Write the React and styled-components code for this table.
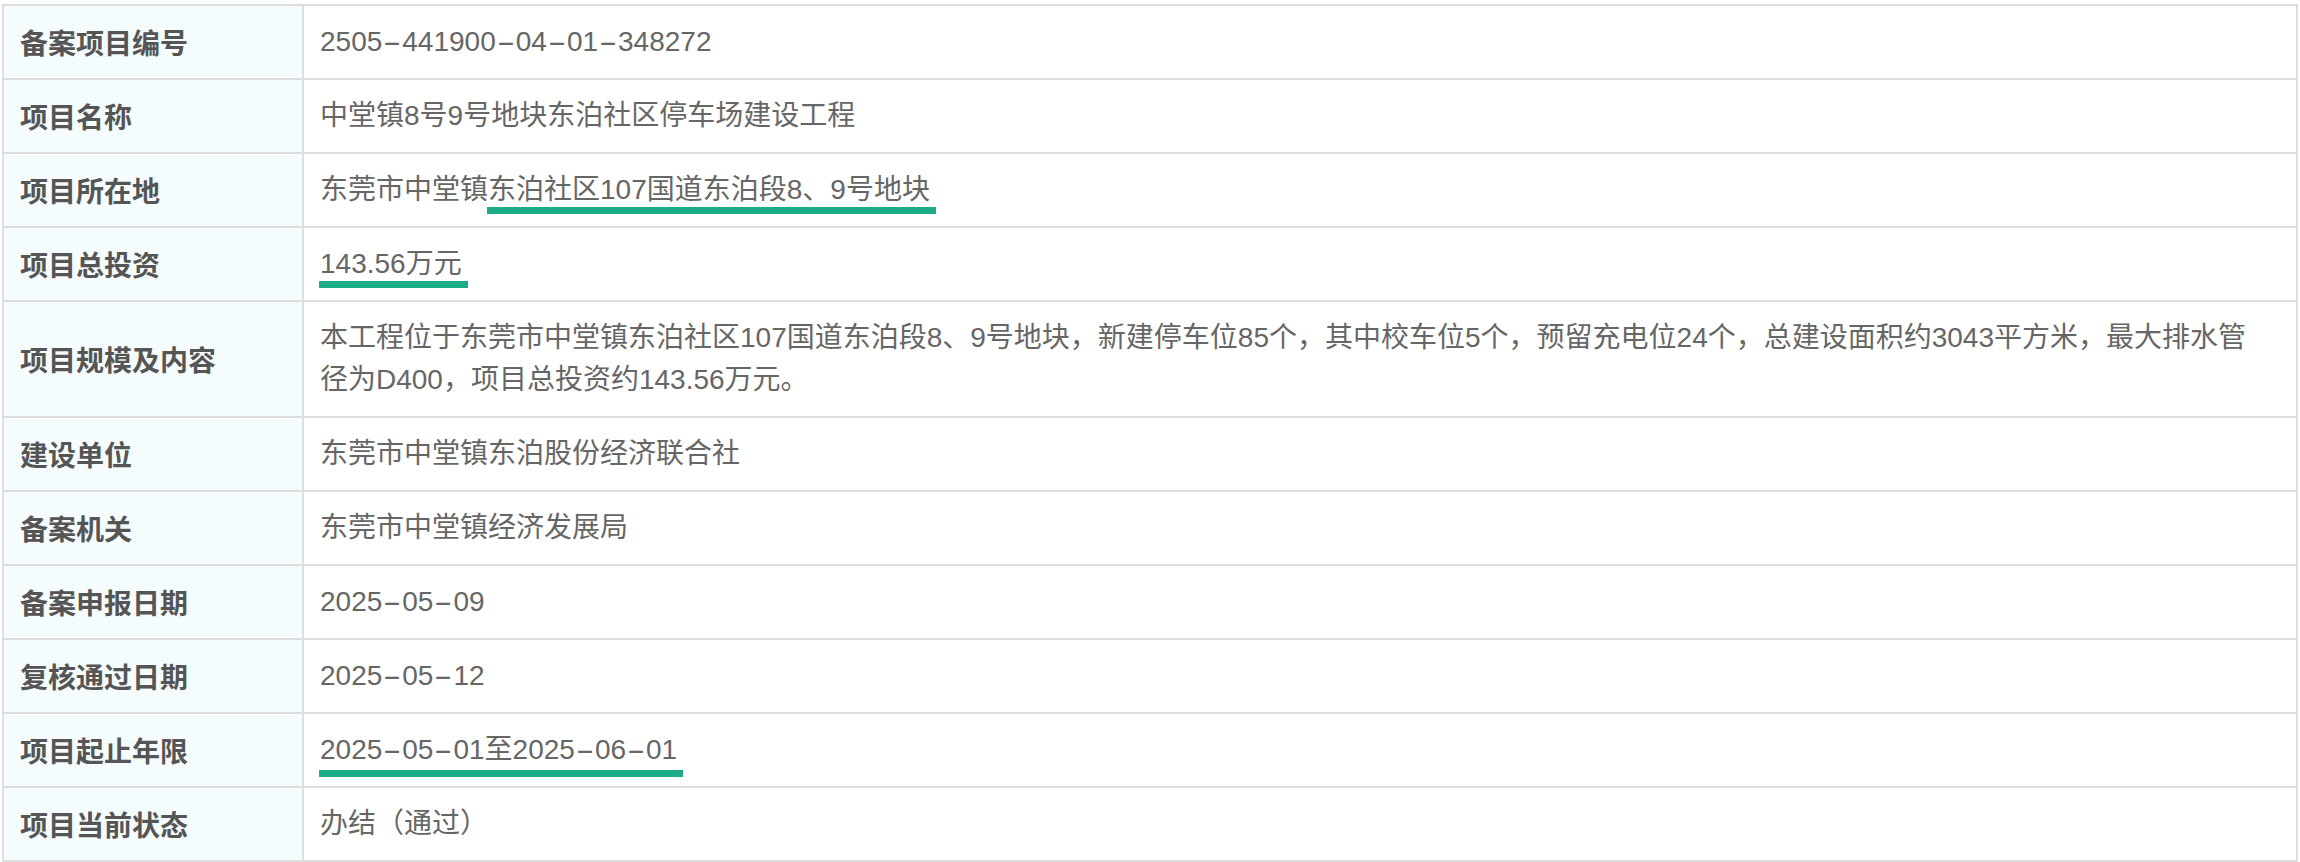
import React from "react";
import styled, { createGlobalStyle } from "styled-components";

// 项目备案信息 table, one row per field
const rows = [
  { label: "备案项目编号", value: "2505-441900-04-01-348272" },
  { label: "项目名称", value: "中堂镇8号9号地块东泊社区停车场建设工程" },
  {
    label: "项目所在地",
    value: "东莞市中堂镇",
    marked: "东泊社区107国道东泊段8、9号地块",
    gap: 2,
  },
  { label: "项目总投资", marked: "143.56万元", gap: 2 },
  {
    label: "项目规模及内容",
    value:
      "本工程位于东莞市中堂镇东泊社区107国道东泊段8、9号地块，新建停车位85个，其中校车位5个，预留充电位24个，总建设面积约3043平方米，最大排水管径为D400，项目总投资约143.56万元。",
  },
  { label: "建设单位", value: "东莞市中堂镇东泊股份经济联合社" },
  { label: "备案机关", value: "东莞市中堂镇经济发展局" },
  { label: "备案申报日期", value: "2025-05-09" },
  { label: "复核通过日期", value: "2025-05-12" },
  { label: "项目起止年限", marked: "2025-05-01至2025-06-01", gap: 5 },
  { label: "项目当前状态", value: "办结（通过）" },
];

// the hyphens in codes and dates are drawn wide, like the original font does
const withDashes = (text) => {
  if (!text) return null;
  const parts = text.split("-");
  return parts.map((part, i) => (
    <React.Fragment key={i}>
      {part}
      {i < parts.length - 1 && <Dash>-</Dash>}
    </React.Fragment>
  ));
};

const App = () => {
  return (
    <>
      <GlobalStyle />
      <Page>
        <Table>
          <tbody>
            {rows.map((row) => (
              <Row key={row.label}>
                <Label>{row.label}</Label>
                <Value>
                  {withDashes(row.value)}
                  {row.marked && (
                    <Mark $gap={row.gap}>{withDashes(row.marked)}</Mark>
                  )}
                </Value>
              </Row>
            ))}
          </tbody>
        </Table>
      </Page>
    </>
  );
};

const GlobalStyle = createGlobalStyle`
  body {
    margin: 0;
    background: #ffffff;
    font-family: "Liberation Sans", "Noto Sans CJK SC", sans-serif;
  }
`;

const Page = styled.div`
  padding: 4px 2px 0 2px;
`;

const Table = styled.table`
  width: 100%;
  border-collapse: collapse;
  border: 2px solid #dedede;
`;

const Row = styled.tr``;

const Label = styled.th`
  width: 266px;
  padding: 15px 16px;
  border: 2px solid #dedede;
  background: #f5fcfd;
  color: #555555;
  font-family: "Noto Sans CJK SC", sans-serif;
  font-size: 28px;
  font-weight: 700;
  line-height: 42px;
  text-align: left;
  vertical-align: middle;
  white-space: nowrap;
`;

const Value = styled.td`
  padding: 15px 36px 15px 16px;
  border: 2px solid #dedede;
  color: #666666;
  font-size: 28px;
  line-height: 42px;
  text-align: left;
  vertical-align: middle;
`;

const Dash = styled.span`
  display: inline-block;
  width: 20px;
  text-align: center;
  transform: scaleX(2);
`;

// green highlight line drawn under part of a value
const Mark = styled.span`
  position: relative;

  &::after {
    content: "";
    position: absolute;
    left: -1px;
    right: -6px;
    top: calc(100% + ${(p) => p.$gap}px);
    height: 7px;
    background: #1aad88;
  }
`;

export default App;
